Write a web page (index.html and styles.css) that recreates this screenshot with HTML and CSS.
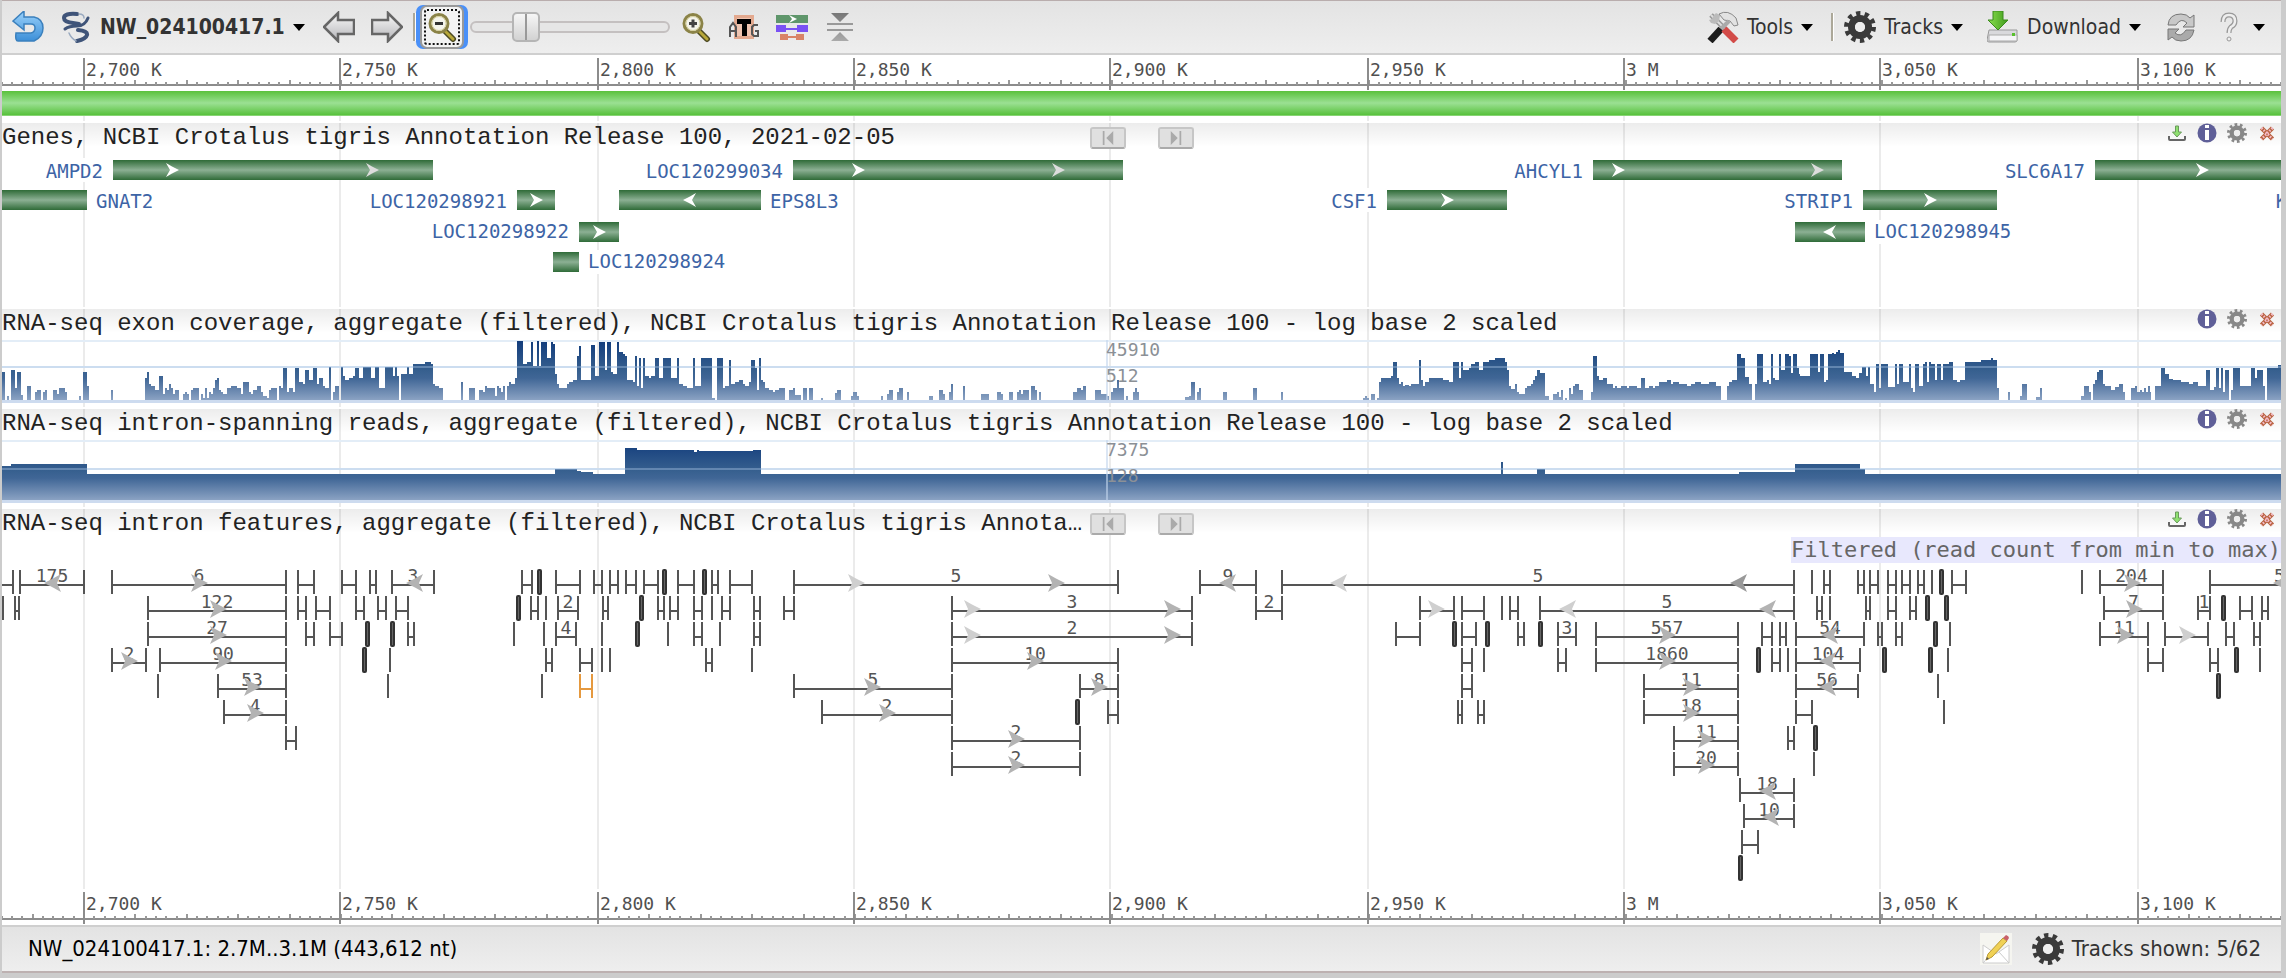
FILE: index.html
```html
<!DOCTYPE html>
<html lang="en">
<head>
<meta charset="utf-8">
<title>NW_024100417.1 - Sequence Viewer</title>
<link rel="stylesheet" href="styles.css">
</head>
<body>
<svg class="defs" aria-hidden="true">
  <defs>
    <linearGradient id="gene" x1="0" y1="0" x2="0" y2="1"><stop offset="0" stop-color="#2f6b38"/><stop offset=".5" stop-color="#8cb094"/><stop offset="1" stop-color="#2f6b38"/></linearGradient>
    <linearGradient id="cover" gradientUnits="userSpaceOnUse" x1="0" y1="4" x2="0" y2="64"><stop offset="0" stop-color="#123c7c"/><stop offset=".5" stop-color="#37608f"/><stop offset=".62" stop-color="#406696"/><stop offset="1" stop-color="#8ea5c5"/></linearGradient>
    <linearGradient id="blue" x1="0" y1="0" x2="0" y2="1"><stop offset="0" stop-color="#9bd2fb"/><stop offset="1" stop-color="#3c8fd8"/></linearGradient>
    <linearGradient id="grey" x1="0" y1="0" x2="0" y2="1"><stop offset="0" stop-color="#fafafa"/><stop offset="1" stop-color="#b4b4b8"/></linearGradient>
    <linearGradient id="dark" x1="0" y1="0" x2="0" y2="1"><stop offset="0" stop-color="#777"/><stop offset="1" stop-color="#aaa"/></linearGradient>
    <linearGradient id="green" x1="0" y1="0" x2="1" y2="0"><stop offset="0" stop-color="#8be04e"/><stop offset="1" stop-color="#3f9a1c"/></linearGradient>
    <symbol id="cog" viewBox="0 0 32 32"><circle cx="16" cy="16" r="13.500" fill="none" stroke="currentColor" stroke-width="5" stroke-dasharray="4.240"/><circle cx="16" cy="16" r="8.500" fill="none" stroke="currentColor" stroke-width="7"/><circle cx="16" cy="16" r="5" fill="#eee"/></symbol>
    <symbol id="lens" viewBox="0 0 32 32"><path d="M19 20l8 8" stroke="#4d4a22" stroke-width="6" stroke-linecap="round"/><path d="M19 20l8 8" stroke="#b8a83a" stroke-width="3" stroke-linecap="round"/><circle cx="13" cy="12.500" r="9" fill="#f4f4ec" stroke="#8b8347" stroke-width="3"/><circle cx="13" cy="12.500" r="7" fill="none" stroke="#d5cf9c" stroke-width="1"/></symbol>
    <symbol id="save" viewBox="0 0 20 20"><path d="M8.500 3h3v6h3L10 14 5.500 9h3z" fill="#8fe070" stroke="#6a9a5c" stroke-width="1"/><path d="M2 13v3q0 1 1 1h14q1 0 1-1v-3" fill="none" stroke="#666" stroke-width="2"/></symbol>
    <symbol id="info" viewBox="0 0 20 20"><circle cx="10" cy="10" r="9.500" fill="#5f5f98"/><path d="M8 2h4v3H8zM8 7h4v10H8z" fill="#fff"/></symbol>
    <symbol id="close" viewBox="0 0 20 20"><path d="M4.500 5l11 11M15.500 5l-11 11" stroke="#b8623f" stroke-width="4.500"/><path d="M4.500 5l11 11M15.500 5l-11 11" stroke="#f5bccb" stroke-width="2.500" stroke-dasharray="1.500 1.500"/></symbol>
    <symbol id="prev" viewBox="0 0 16 16"><path d="M2 0h2v16H2zM14 0v16L6 8z" fill="#aaa"/></symbol>
    <symbol id="next" viewBox="0 0 16 16"><path d="M12 0h2v16h-2zM2 0v16l8-8z" fill="#aaa"/></symbol>
  </defs>
</svg>
<div class="viewer">
  <header class="toolbar">
    <button class="tool" aria-label="Back"><svg class="icon" viewBox="0 0 32 32"><path d="M1 10L12 0v6h10q9 2 9 11t-9 13H6q-3 0-2-8h15q4-1 4-5t-4-4h-7v6z" fill="url(#blue)" stroke="#3b80bd" stroke-width="1.500"/></svg></button>
    <button class="tool menu sequence"><svg class="icon" viewBox="0 0 32 32" fill="none" stroke="#3f5479" stroke-width="4" stroke-linecap="round"><path d="M17 3Q4 2 4 7q0 4 9 5l6 1"/><path d="M5 18q4-3 12-3t11-8" stroke-width="3"/><path d="M18 19q10 1 9 5-1 4-10 6"/><path d="M19 3q5 0 5 4M9 22q2 5 7 8" stroke="#9aaac0" stroke-width="1.500"/></svg><span>NW_024100417.1</span><i class="caret"></i></button>
    <button class="tool first" aria-label="Pan left"><svg class="icon" viewBox="0 0 32 32"><path d="M1 16L15 2v7h16v14H15v7z" fill="url(#grey)" stroke="#666" stroke-width="2.500"/></svg></button>
    <button class="tool" aria-label="Pan right"><svg class="icon" viewBox="0 0 32 32"><path d="M31 16L17 2v7H1v14h16v7z" fill="url(#grey)" stroke="#666" stroke-width="2.500"/></svg></button>
    <div class="zoom">
      <i class="rule"></i>
      <button class="focused" aria-label="Zoom out"><svg class="icon" viewBox="0 0 32 32"><use href="#lens"/><path d="M9 11h8v3H9z" fill="#333"/></svg></button>
      <input type="range" min="0" max="100" value="24" aria-label="Zoom level">
    </div>
    <button class="tool zoom-in" aria-label="Zoom in"><svg class="icon" viewBox="0 0 32 32"><use href="#lens"/><path d="M9 11h8v3H9zM11.500 8.500h3v8h-3z" fill="#444"/></svg></button>
    <button class="tool" aria-label="Sequence"><svg class="icon" viewBox="0 0 32 32"><rect x="6" y="4" width="20" height="24" fill="#e3a98f"/><rect x="9" y="7" width="14" height="18" fill="#efc4b0"/><path d="M2 26V16l3-4 3 4v10M2 20h6M30 14h-4l-2 2v7l2 2h4v-5h-3" fill="none" stroke="#555" stroke-width="2"/><path d="M9 8h14v5h-4v12h-5V13H9z"/></svg></button>
    <button class="tool" aria-label="Track layout"><svg class="icon" viewBox="0 0 32 32"><path d="M0 4h32v8H0z" fill="#5f966b"/><path d="M13 4l8 4-8 4 3-4z" fill="#fff"/><path d="M0 14h10v7H0zM21 14h11v7H21zM10 17h11v2H10z" fill="#7a52f4"/><path d="M4 23h8v6H4zM20 23h8v6H20zM12 25h8v2H12z" fill="#d98468"/></svg></button>
    <button class="tool" aria-label="Collapse"><svg class="icon" viewBox="0 0 32 32"><path d="M7 2h18l-9 9zM7 30h18l-9-9z" fill="url(#dark)"/><path d="M3 12h26v2H3zM3 18h26v2H3z" fill="#999"/></svg></button>
    <span class="space"></span>
    <button class="tool menu"><svg class="icon" viewBox="0 0 32 32"><path d="M4 4l17 17" stroke="#999" stroke-width="5"/><path d="M4 4l17 17" stroke="#ddd" stroke-width="2"/><path d="M2 9l3-1 2-4 2-2 4 2-1 6-4 3-4-1z" fill="#bbb"/><path d="M12 3q9-5 17 4l2 7-4 1-4-5-6-1z" fill="#e2e2e2" stroke="#888"/><path d="M22 10L11 21" stroke="#aaa" stroke-width="4"/><path d="M14 18L3 30" stroke="#1c1c1c" stroke-width="7"/><path d="M17 18l12 12" stroke="#d24b48" stroke-width="7"/></svg><span>Tools</span><i class="caret"></i></button>
    <i class="rule split"></i>
    <button class="tool menu tracks"><svg class="icon dark"><use href="#cog"/></svg><span>Tracks</span><i class="caret"></i></button>
    <button class="tool menu download"><svg class="icon" viewBox="0 0 32 32"><path d="M2 19h28v10q0 2-2 2H2q-2 0-2-2z" fill="#d9d9dc" stroke="#999"/><path d="M2 24h28v6H2z" fill="#f4f4f6" stroke="#aaa"/><path d="M25 22h3v3h-3z" fill="#57c02c"/><path d="M6 0h10v9h5L11 19 1 9h5z" fill="url(#green)" stroke="#3b8a1c"/></svg><span>Download</span><i class="caret"></i></button>
    <button class="tool refresh" aria-label="Refresh"><svg class="icon" viewBox="0 0 32 32" stroke="#777"><path d="M3 14Q4 3 16 3q6 0 9 4l4-3v12H18l4-4q-6-6-11 2z" fill="#c8c8c8"/><path d="M29 19q-2 11-13 11-6 0-9-4l-4 3V18h11l-4 4q6 5 11-3z" fill="#aaa"/></svg></button>
    <button class="tool menu help" aria-label="Help"><svg class="icon" viewBox="0 0 32 32"><path d="M10 11q0-7 6-7t6 6q0 4-4 6-2 2-2 6" fill="none" stroke="#999" stroke-width="5"/><path d="M10 11q0-7 6-7t6 6q0 4-4 6-2 2-2 6" fill="none" stroke="#eee" stroke-width="2.500"/><circle cx="16" cy="28" r="2" fill="#eee" stroke="#999"/></svg><i class="caret"></i></button>
  </header>

  <main class="panel">
    <svg class="grid" aria-hidden="true"></svg>
    <svg class="ruler"></svg>
    <div class="sequence-bar"></div>

    <section class="track">
      <div class="track-head with-nav">
        <h2>Genes, NCBI Crotalus tigris Annotation Release 100, 2021-02-05</h2>
        <div class="nav"><button aria-label="Previous gene"><svg><use href="#prev"/></svg></button><button aria-label="Next gene"><svg><use href="#next"/></svg></button></div>
        <div class="actions"><button aria-label="Download"><svg><use href="#save"/></svg></button><button aria-label="Info"><svg><use href="#info"/></svg></button><button aria-label="Settings"><svg><use href="#cog"/></svg></button><button aria-label="Close"><svg><use href="#close"/></svg></button></div>
      </div>
      <svg class="genes"></svg>
    </section>

    <section class="track">
      <div class="track-head">
        <h2>RNA-seq exon coverage, aggregate (filtered), NCBI Crotalus tigris Annotation Release 100 - log base 2 scaled</h2>
        <div class="actions"><button aria-label="Info"><svg><use href="#info"/></svg></button><button aria-label="Settings"><svg><use href="#cog"/></svg></button><button aria-label="Close"><svg><use href="#close"/></svg></button></div>
      </div>
      <svg class="graph exon"></svg>
    </section>

    <section class="track">
      <div class="track-head">
        <h2>RNA-seq intron-spanning reads, aggregate (filtered), NCBI Crotalus tigris Annotation Release 100 - log base 2 scaled</h2>
        <div class="actions"><button aria-label="Info"><svg><use href="#info"/></svg></button><button aria-label="Settings"><svg><use href="#cog"/></svg></button><button aria-label="Close"><svg><use href="#close"/></svg></button></div>
      </div>
      <svg class="graph reads"></svg>
    </section>

    <section class="track last">
      <div class="track-head with-nav">
        <h2>RNA-seq intron features, aggregate (filtered), NCBI Crotalus tigris Annotation Release 100</h2>
        <div class="nav"><button aria-label="Previous intron"><svg><use href="#prev"/></svg></button><button aria-label="Next intron"><svg><use href="#next"/></svg></button></div>
        <div class="actions"><button aria-label="Download"><svg><use href="#save"/></svg></button><button aria-label="Info"><svg><use href="#info"/></svg></button><button aria-label="Settings"><svg><use href="#cog"/></svg></button><button aria-label="Close"><svg><use href="#close"/></svg></button></div>
      </div>
      <p class="filter">Filtered (read count from min to max)</p>
      <svg class="introns"></svg>
    </section>
    <svg class="ruler"></svg>
  </main>

  <footer class="status">
    <span>NW_024100417.1: 2.7M..3.1M (443,612 nt)</span>
    <span class="space"></span>
    <button class="tool" aria-label="Feedback"><svg class="icon" viewBox="0 0 32 32"><path d="M0 0h32v32H0z" fill="#f5f5f0"/><path d="M3 12l13 9 13-9v18H3zM3 30l10-11M29 30L19 19" fill="#fff" stroke="#ccc"/><path d="M6 27l2-6L23 5l4 3-15 16z" fill="#f0d155" stroke="#b99a35"/><path d="M23 5l3-3q3 1 3 3l-2 3z" fill="#c8606a"/><path d="M6 27l1-3 2 2z" fill="#555"/></svg></button>
    <button class="tool menu shown"><svg class="icon dark"><use href="#cog"/></svg><span>Tracks shown: 5/62</span></button>
  </footer>
</div>
<script src="viewer.js"></script>
</body>
</html>
```
FILE: styles.css
```css
* { box-sizing: border-box; }
body { margin: 0; background: #d0d0d0; }
.defs { position: absolute; width: 0; height: 0; }
.viewer {
  display: flex;
  flex-direction: column;
  min-height: 100vh;
  border: solid #cccccc;
  border-width: 0 5px 5px 2px;
  font: 21px/32px "DejaVu Sans Condensed", "DejaVu Sans", sans-serif;
  color: #333;
}
button { font: inherit; color: inherit; background: none; border: 0; padding: 0; display: flex; align-items: center; justify-content: center; }
.icon { width: 32px; height: 32px; flex: none; display: block; }
.toolbar {
  display: flex;
  align-items: center;
  gap: 16px;
  height: 55px;
  padding: 0 16px 0 10px;
  border-top: 1px solid #b9adad;
  border-bottom: 2px solid #cfcfcf;
  background: linear-gradient(#e3e3e3, #eeeeee);
}
.menu { gap: 8px; }
.sequence { font-weight: bold; }
.caret { border: 6px solid transparent; border-top: 7px solid #000; border-bottom: 0; }
.first { margin-left: 2px; }
.zoom { display: flex; align-items: center; margin-left: -6px; }
.rule { width: 3px; height: 28px; border-left: 2px solid #aca899; border-right: 1px solid #fff; }
.split { margin: 0 -4px 0 2px; }
.focused {
  width: 44px;
  height: 44px;
  margin: 0 6px 0 4px;
  border: 2px solid #999;
  border-radius: 7px;
  background: #f3f3f3;
  box-shadow: -4px 0 #4a90f8, 4px 0 #4a90f8;
  outline: 2px dotted #111;
  outline-offset: -6px;
}
.zoom input { appearance: none; width: 200px; height: 32px; margin: 0; background: none; }
.zoom input::-webkit-slider-runnable-track { height: 12px; border: 2px solid #c4c0c0; border-radius: 6px; background: #e6e6e6; }
.zoom input::-webkit-slider-thumb {
  appearance: none;
  width: 28px;
  height: 30px;
  margin-top: -11px;
  border: 2px solid #b5b5b5;
  border-radius: 5px;
  background: linear-gradient(90deg, transparent 11px, #999 11px, #999 13px, transparent 13px), linear-gradient(#f6f6f6, #d2d2d2);
}
.zoom-in { margin-left: -6px; }
.space { flex: 1; }
.dark { color: #3a3a3a; }
.tracks { margin-left: -2px; }
.download, .refresh { margin-left: 8px; }

.panel { position: relative; display: flex; flex-direction: column; flex: 1; background: #fff; overflow: hidden; }
.panel > * { position: relative; }
.panel > .grid { position: absolute; left: 0; top: 0; width: 100%; height: 100%; }
.ruler { display: block; width: 100%; height: 36px; background: #fff; font: 18px "DejaVu Sans Mono", monospace; fill: #505050; }
.sequence-bar { height: 25px; margin-bottom: 5px; background: linear-gradient(#5ac13c, #9be093 48%, #58c13c 96%, #b8e6ac); flex: none; }
.track { border-top: 2px solid #fff; }
.track svg { display: block; }
.track-head { display: grid; grid-template-columns: 1fr auto; height: 28px; background: linear-gradient(rgba(0, 0, 0, .075), rgba(0, 0, 0, 0) 24px); }
.with-nav { grid-template-columns: 1fr auto 1fr; }
.track-head h2 { margin: 0; font: 24px/30px "Liberation Mono", monospace; color: #222; white-space: nowrap; overflow: hidden; text-overflow: ellipsis; }
.nav { display: flex; gap: 32px; padding-top: 4px; }
.nav button { width: 36px; height: 22px; border: 2px solid #c6c6c6; border-bottom-color: #aaa; border-radius: 3px; background: #e0e0e0; }
.nav svg { width: 16px; height: 14px; }
.actions { display: flex; justify-content: flex-end; gap: 10px; padding-right: 4px; align-self: start; color: #888; }
.actions svg { width: 20px; height: 20px; }
.genes, .graph, .introns { width: 100%; }
.genes { height: 156px; font: 19px "DejaVu Sans Mono", monospace; fill: #3d64a6; }
.graph { height: 70px; font: 18px "DejaVu Sans Mono", monospace; fill: #8b9096; }
.introns { height: 324px; font: 18px "DejaVu Sans Mono", monospace; fill: #555; }
.last { display: flex; flex-direction: column; flex: 1; }
.filter { align-self: flex-end; margin: 0; height: 26px; background: #e8e8fd; color: #666; font: 22px/26px "DejaVu Sans Mono", monospace; }
.ruler, .grid { flex: none; }

.status {
  display: flex;
  align-items: center;
  gap: 20px;
  height: 48px;
  padding: 0 20px 0 26px;
  border-top: 2px solid #cfcfcf;
  border-bottom: 2px solid #bdb1b1;
  background: linear-gradient(#e3e3e3, #eeeeee);
  color: #000;
  font-size: 22px;
}
.shown { color: #333; }
```
FILE: viewer.js
```js
// Feature positions are stored in axis units and scaled to the panel.
const SPAN = 2279, ORIGIN = 2;
const MAJOR = [[84, "2,700 K"], [340, "2,750 K"], [598, "2,800 K"], [854, "2,850 K"], [1110, "2,900 K"], [1368, "2,950 K"], [1624, "3 M"], [1881, "3,050 K"], [2140, "3,100 K"]];

// name, row, start, end, label side, arrows (sign gives the strand), faded arrow
const GENES = [
  ["AMPD2", 0, 113, 433, "l", [172], 372], ["GNAT2", 1, -9, 87, "r", []],
  ["LOC120298921", 1, 517, 555, "l", [536]], ["LOC120299034", 0, 793, 1123, "l", [858], 1058],
  ["EPS8L3", 1, 619, 761, "r", [-690]], ["LOC120298922", 2, 579, 619, "l", [599]],
  ["LOC120298924", 3, 553, 579, "r", []], ["CSF1", 1, 1387, 1507, "l", [1447]],
  ["AHCYL1", 0, 1593, 1843, "l", [1618], 1818], ["STRIP1", 1, 1864, 1998, "l", [1931]],
  ["LOC120298945", 2, 1795, 1866, "r", [-1831]], ["SLC6A17", 0, 2097, 2300, "l", [2205]],
  ["KCNA3", 1, 2346, 2400, "l", []]
];

// Step profiles: start, height, start, height ...
const EXON = [2,29,5,0,7,5,9,0,11,31,15,13,17,29,21,6,23,0,27,15,31,0,35,9,37,11,41,0,43,9,45,11,47,0,53,11,57,7,59,13,65,9,67,0,79,5,81,0,83,29,87,15,89,0,111,11,113,0,
145,23,147,29,149,17,151,15,155,11,159,25,163,7,165,13,167,11,169,17,171,13,173,7,175,11,179,0,183,7,185,9,187,7,189,0,191,11,193,13,199,0,201,7,203,3,205,13,207,3,209,9,211,7,213,13,215,21,217,23,219,11,221,9,223,7,227,13,231,15,237,13,241,7,243,19,249,9,251,7,253,11,257,15,261,9,263,5,267,3,269,11,271,13,277,0,
279,15,281,13,283,33,287,9,289,13,293,9,295,33,299,19,303,17,305,31,309,21,313,33,317,17,319,23,323,15,325,13,329,34,331,0,333,9,335,15,339,0,341,34,343,25,345,21,349,23,353,25,355,33,359,23,363,34,371,23,375,34,379,13,385,34,393,25,395,34,397,25,399,0,401,27,407,34,409,27,413,37,425,39,431,37,433,17,435,15,439,13,443,0,
461,19,463,0,469,13,475,0,479,11,483,9,485,15,487,13,495,5,497,15,499,13,501,9,503,15,505,0,507,15,509,19,511,17,515,23,517,60,523,37,527,39,531,59,533,35,537,60,539,35,541,59,547,43,551,59,553,57,555,27,557,17,559,13,567,17,569,19,573,21,577,45,579,55,581,21,591,56,595,25,599,59,605,31,607,59,611,29,613,27,617,59,619,49,623,47,625,45,627,21,633,19,635,45,637,15,639,43,641,13,643,43,645,25,649,23,651,25,655,43,659,23,663,43,671,23,677,43,679,17,683,15,687,13,693,43,695,15,701,43,712,3,715,0,717,43,723,13,725,15,729,41,731,17,735,19,739,21,743,17,745,15,749,19,751,41,755,33,757,11,759,43,761,21,763,19,765,13,769,11,773,9,775,11,779,13,785,0,
789,11,793,13,795,6,801,0,803,13,807,0,809,13,813,0,821,3,823,0,835,8,837,11,841,0,851,5,853,9,857,5,859,0,881,5,883,0,887,7,889,11,893,0,897,9,899,13,903,0,907,9,909,0,929,5,933,0,939,11,943,7,945,0,949,9,951,17,953,0,963,15,965,0,981,7,989,0,997,9,1001,7,1003,0,1009,9,1013,0,1017,9,1019,11,1021,7,1023,11,1029,0,1031,15,1035,11,1037,0,1039,9,1041,0,1073,9,1077,13,1081,11,1083,15,1086,0,1095,11,1101,7,1107,5,1109,0,1111,9,1113,13,1117,21,1119,13,1124,0,1126,5,1128,0,1133,9,1135,13,1137,9,1139,0,1185,4,1189,5,1191,19,1195,0,1197,9,1199,13,1201,0,1223,9,1227,0,1253,13,1257,0,1281,9,1283,0,
1363,3,1365,5,1367,3,1369,0,1371,7,1375,0,1377,3,1379,19,1381,23,1391,25,1393,39,1397,23,1399,17,1401,19,1403,15,1405,16,1409,15,1411,17,1419,41,1421,21,1423,15,1425,19,1429,23,1443,21,1449,19,1453,39,1459,23,1461,39,1463,31,1469,33,1471,37,1475,39,1479,31,1483,39,1489,41,1495,43,1505,39,1507,31,1509,15,1511,12,1515,17,1517,9,1519,7,1525,13,1527,15,1531,17,1533,21,1535,25,1537,31,1540,28,1545,5,1549,0,1553,7,1557,9,1559,4,1561,11,1563,0,1565,3,1567,0,1569,13,1571,7,1573,15,1575,17,1579,11,1583,0,
1591,9,1593,45,1597,25,1599,21,1603,23,1607,17,1613,13,1615,15,1617,13,1621,15,1627,13,1629,15,1637,13,1641,23,1645,13,1649,15,1653,13,1655,15,1659,19,1667,21,1671,17,1673,19,1679,17,1687,15,1691,17,1695,19,1701,17,1709,19,1716,15,1721,0,1727,15,1729,19,1732,21,1737,47,1741,43,1745,24,1749,17,1752,0,1755,17,1757,47,1763,19,1767,21,1769,17,1771,47,1773,23,1775,21,1779,47,1781,31,1785,47,1789,45,1791,28,1793,47,1797,33,1799,27,1801,25,1811,47,1819,29,1821,47,1825,19,1827,21,1829,47,1833,48,1835,47,1837,49,1839,51,1841,48,1845,29,1853,25,1857,23,1860,28,1863,34,1867,25,1869,34,1871,17,1875,9,1877,37,1880,13,1882,37,1889,14,1896,37,1898,17,1900,37,1904,19,1910,37,1912,13,1914,9,1916,37,1920,15,1924,37,1926,39,1928,19,1930,39,1932,37,1936,21,1938,37,1942,21,1944,37,1950,39,1954,21,1958,19,1961,21,1966,39,1982,41,1992,43,1994,41,1998,13,2000,0,
2010,9,2012,0,2022,5,2024,17,2029,0,2038,4,2042,13,2044,0,2083,5,2086,15,2091,9,2093,0,2095,17,2097,21,2099,29,2101,31,2105,17,2107,15,2113,11,2117,14,2121,17,2125,9,2127,0,2133,13,2137,15,2139,9,2142,11,2144,9,2146,13,2148,9,2150,15,2152,9,2153,0,2157,15,2163,33,2167,27,2171,22,2175,21,2183,19,2191,17,2195,19,2200,15,2209,31,2213,11,2217,14,2219,33,2222,13,2224,33,2226,9,2228,31,2232,0,2234,11,2236,33,2243,15,2254,33,2258,23,2260,31,2266,15,2268,0,2270,33,2281,36,2284,0];
const READS = [2,35,11,37,87,27,555,32,577,30,581,29,593,27,625,53,637,51,694,49,697,51,699,50,753,51,761,27,1501,39,1503,27,1537,32,1545,27,1739,29,1795,37,1861,32,1866,27,2284,0];

// One array per row: [start, end, count, arrows]. A lone number is a thin
// mark and "t" + number a narrow box; arrows are [position, shade].
const R1 = "#b3b3b3", R2 = "#cfcfcf", R3 = "#999";
const INTRONS = [
  [[-9,13],[20,84,"175",[-53,R1]],[112,286,"6",[199,R1]],[298,314],[342,356],[370,376],[392,434,"3",[-415,R1]],[522,532],"t540",[556,580],[594,602],[610,618],[626,636],[644,658],"t665",[678,694],"t705",[712,718],[730,752],[794,1118,"5",[856,R2],[1056,R1]],[1200,1256,"9",[-1228,R1]],[1282,1794,"5",[-1339,R2],[-1739,R3]],1813,[1825,1831],[1859,1865],[1871,1879],[1889,1897],[1903,1911],[1919,1925],1933,"t1943",[1953,1967],2084,[2102,2165,"204",[2134,R1]],[2213,2352,"5",[-2285,R1]]],
  [3,[15,19],[148,286,"122",[218,R1]],[298,306],[316,330],[356,364],[378,386],[396,408],"t519",[531,538],546,[558,578,"2"],[603,608],"t642",[658,664],[670,678],[694,702],712,[722,730],[754,760],[784,794],[952,1192,"3",[972,R2],[1172,R1]],[1256,1282,"2"],[1420,1454,"",[1436,R2]],[1462,1484],1502,[1510,1518],[1540,1794,"5",[-1568,R2],[-1768,R1]],[1818,1823],1831,[1867,1871],[1889,1897],[1911,1917],"t1929","t1948",[2106,2165,"7",[2136,R1]],[2200,2213,"1"],"t2227",[2243,2255],[2265,2271]],
  [[148,286,"27",[218,R1]],[306,314],[330,342],"t368","t393",[408,414],514,544,[556,576,"4"],602,"t638",668,[694,702],720,[754,760],[952,1192,"2",[972,R2],[1172,R1]],[1396,1420],"t1455",[1462,1476],"t1488",[1518,1524],"t1541",[1558,1576,"3"],[1596,1738,"557",[1667,R1]],[1762,1772],[1780,1786],[1796,1865,"54",[-1831,R1]],[1879,1883],[1897,1903],"t1937",1951,[2102,2150,"11",[2127,R1]],[2167,2211,"",[2189,R2]],[2229,2237],[2257,2263]],
  [[112,146,"2",[129,R1]],[160,286,"90",[223,R1]],"t365",390,[546,552],[580,592],602,610,[706,712],752,[952,1118,"10",[1035,R1]],[1462,1472],1484,[1558,1566],[1596,1738,"1860",[1667,R1]],"t1759",[1772,1780],1788,[1796,1861,"104",[-1829,R1]],"t1886","t1932",1949,[2150,2165],[2213,2221],"t2240",2263],
  [158,[218,286,"53",[252,R1]],388,542,[580,592,"orange"],[794,952,"5",[872,R1]],[1080,1118,"8",[1099,R1]],[1462,1472],[1644,1738,"11",[1691,R1]],[1796,1859,"56",[-1829,R1]],1939,"t2222"],
  [[224,286,"4",[255,R1]],[822,952,"2",[887,R1]],"t1078",[1108,1118],[1458,1462],[1478,1484],[1644,1738,"18",[1691,R1]],[1796,1813],1945],
  [[286,296],[952,1080,"2",[1016,R1]],[1674,1738,"11",[1706,R1]],[1788,1794],"t1817"],
  [[952,1080,"2",[1016,R1]],[1674,1738,"20",[1706,R1]],1815],
  [[1740,1794,"18",[-1768,R1]]],
  [[1744,1794,"10",[-1771,R1]]],
  [[1742,1758]],
  ["t1741"]
];

// Axis units right of BEND are slightly narrower.
const BEND = 1700;
let scale = 1;
const px = v => Math.round(((v > BEND ? BEND + (v - BEND) * 0.995 : v) - ORIGIN) * scale);
const box = (x, y, w, h, fill, extra = "") => `<rect x="${x}" y="${y}" width="${w}" height="${h}" fill="${fill}" ${extra}/>`;
const text = (x, y, s, anchor = "start") => `<text x="${x}" y="${y}" text-anchor="${anchor}">${s}</text>`;

function arrow(pos, y, fill, w, h) {
  const d = Math.sign(pos), x = px(Math.abs(pos));
  return `<path fill="${fill}" d="M${x - d * w} ${y - h}L${x} ${y - h / 2}L${x + d * (w + 1)} ${y}L${x} ${y + h / 2}L${x - d * w} ${y + h}L${x - d * (w - 4)} ${y}Z"/>`;
}

function ruler() {
  let out = box(0, 29, "100%", 2, "#8c8c8c");
  for (let i = -8; i < 216; i++) {
    const x = px(84 + i * 10.28), tall = i % 5 === 0;
    out += box(x - 1, tall ? 25 : 27, 2, tall ? 4 : 3, "#999");
  }
  for (const [x, label] of MAJOR) out += box(px(x) - 1, 3, 2, 32, "#8c8c8c") + text(px(x) + 2, 21, label);
  return out;
}

function genes() {
  const rows = [9, 39, 71, 101];
  let out = "";
  for (const [name, row, a, b, side, marks, faded] of GENES) {
    const y = rows[row], w = name.length * 11.44;
    const lx = side === "l" ? px(a) - 10 - w : px(b) + 9;
    out += box(lx - 4, y - 2, w + 8, 24, "#fff") + text(lx, 27 + row * 30, name);
    out += box(px(a), y, px(b) - px(a), 20, "url(#gene)");
    for (const m of marks) out += arrow(m, y + 10, "#fff", 6, 7);
    if (faded) out += arrow(faded, y + 10, "#ddd", 6, 7);
  }
  return out;
}

function graph(steps, base, mid, top, low, midY) {
  let d = `M0 ${base}`;
  for (let i = 0; i < steps.length; i += 2) d += `H${px(steps[i])}V${base - steps[i + 1]}`;
  const ax = px(1106);
  return box(0, 3, "100%", 2, "#e3edf7") + box(0, mid, "100%", 2, "#e3edf7")
    + `<path fill="url(#cover)" d="${d}V${base}Z"/>`
    + box(0, mid, "100%", 2, "#a9c6e6", 'opacity=".4"')
    + box(0, base - 1, "100%", 3, "#cddbef") + box(ax, 3, 2, base - 3, "#c3d5ec", 'opacity=".6"')
    + text(ax, 19, top) + text(ax, midY, low);
}

function introns() {
  let out = "";
  INTRONS.forEach((row, r) => {
    const y = 7 + r * 26;
    for (const f of row) {
      if (typeof f === "number") out += box(px(f) - 1, y, 2, 24, "#555");
      else if (typeof f === "string") {
        const x = px(+f.slice(1));
        out += box(x - 3, y - 1, 5, 26, "#333", 'rx="2"') + box(x - 1, y + 1, 1, 22, "#666");
      } else {
        const [a, b, label, ...marks] = f, orange = label === "orange", c = orange ? "#e5993f" : "#555";
        out += box(px(a) - 1, y, 2, 24, c) + box(px(b) - 1, y, 2, 24, c) + box(px(a), y + 14, px(b) - px(a), 2, c);
        if (label && !orange) out += text((px(a) + px(b)) / 2, y + 12, label, "middle");
        for (const [m, shade] of marks) out += arrow(m, y + 13, shade, 8, 9);
      }
    }
  });
  return out;
}

function draw() {
  const $ = s => document.querySelector(s);
  scale = $(".panel").clientWidth / SPAN;
  document.querySelectorAll(".ruler").forEach(e => e.innerHTML = ruler());
  $(".grid").innerHTML = MAJOR.map(([x]) => box(px(x) - 1, 36, 2, "100%", "#ebebeb")).join("");
  $(".genes").innerHTML = genes();
  $(".exon").innerHTML = graph(EXON, 64, 29, "45910", "512", 45);
  $(".reads").innerHTML = graph(READS, 64, 31, "7375", "128", 45);
  $(".introns").innerHTML = introns();
}
draw();
addEventListener("resize", draw);
```
